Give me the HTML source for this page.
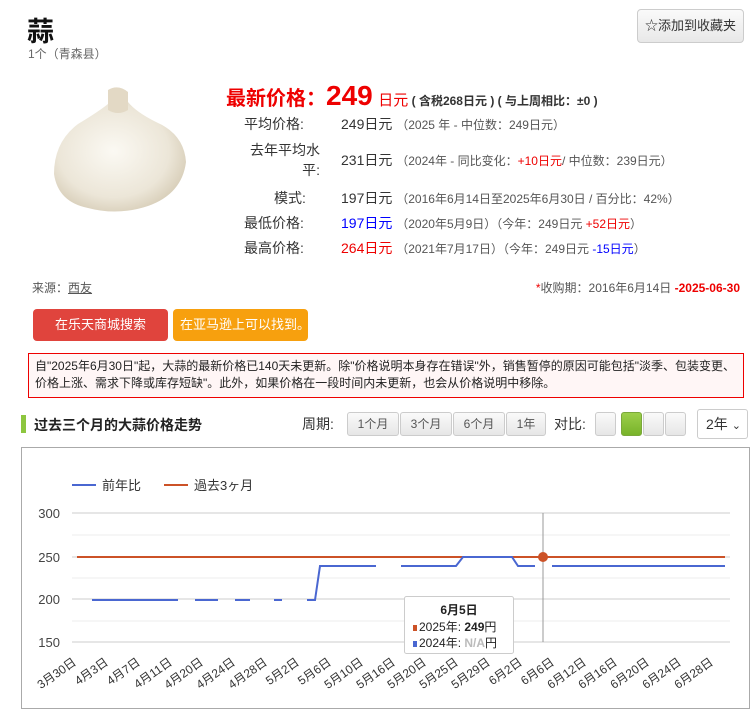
<!DOCTYPE html>
<html><head><meta charset="utf-8">
<style>
*{margin:0;padding:0;box-sizing:border-box}
body{width:752px;height:709px;background:#fff;font-family:"Liberation Sans","Noto Sans CJK SC",sans-serif;color:#333;position:relative;overflow:hidden;font-size:13px}
.a{position:absolute;white-space:nowrap}
.g{color:#555;font-size:12px}
.btn{border-radius:4px;color:#fff;font-size:13px;text-align:center;line-height:32px}
.pb{position:absolute;top:412px;height:24px;border:1px solid #ccc;border-radius:3px;background:linear-gradient(#fafafa,#e6e6e6);font-size:12px;color:#555;text-align:center;line-height:22px}
</style></head><body>
<div class="a" style="left:27px;top:10px;font-size:27px;font-weight:bold;color:#111">蒜</div>
<div class="a" style="left:28px;top:45px;font-size:12px;color:#666">1个（青森县）</div>
<div class="a" style="left:637px;top:9px;width:107px;height:34px;border:1px solid #ccc;border-radius:4px;background:linear-gradient(#fafafa,#e8e8e8);font-size:13px;line-height:32px;text-align:center;color:#333">☆添加到收藏夹</div>

<svg class="a" style="left:48px;top:82px" width="142" height="132"><defs><radialGradient id="gr" cx="45%" cy="45%" r="60%"><stop offset="0" stop-color="#fbf9f3"/><stop offset=".7" stop-color="#ece6d8"/><stop offset="1" stop-color="#d6ccb6"/></radialGradient></defs>
<path d="M60 22 Q50 30 30 42 Q6 60 6 92 Q10 120 40 126 Q70 134 100 124 Q134 112 138 80 Q136 52 108 40 Q88 30 80 20 Z" fill="url(#gr)"/>
<path d="M60 8 Q70 2 80 10 L80 28 Q70 34 60 28 Z" fill="#e3d9c5"/></svg>

<div class="a" style="left:226px;top:80px;color:#e00;font-size:20px;font-weight:bold">最新价格：<span style="font-size:28px;font-family:'Liberation Sans',sans-serif">249</span> <span style="font-size:15px;font-weight:normal">日元</span><span style="font-size:12px;color:#333"> ( 含税268日元 ) ( 与上周相比：±0 )</span></div>
<div class="a" style="left:244px;top:114px;font-size:14px">平均价格:</div>
<div class="a" style="left:341px;top:114px;font-size:14px">249日元 <span class="g">（2025 年 - 中位数：249日元）</span></div>
<div class="a" style="left:244px;top:140px;font-size:14px;line-height:20px;text-align:right;width:76px;white-space:normal">去年平均水平:</div>
<div class="a" style="left:341px;top:150px;font-size:14px">231日元 <span class="g">（2024年 - 同比变化：<span style="color:#e00">+10日元</span>/ 中位数：239日元）</span></div>
<div class="a" style="left:274px;top:188px;font-size:14px">模式:</div>
<div class="a" style="left:341px;top:188px;font-size:14px">197日元 <span class="g">（2016年6月14日至2025年6月30日 / 百分比：42%）</span></div>
<div class="a" style="left:244px;top:213px;font-size:14px">最低价格:</div>
<div class="a" style="left:341px;top:213px;font-size:14px"><span style="color:#00f">197日元</span> <span class="g">（2020年5月9日）（今年：249日元 <span style="color:#e00">+52日元</span>）</span></div>
<div class="a" style="left:244px;top:238px;font-size:14px">最高价格:</div>
<div class="a" style="left:341px;top:238px;font-size:14px"><span style="color:#e00">264日元</span> <span class="g">（2021年7月17日）（今年：249日元 <span style="color:#00f">-15日元</span>）</span></div>

<div class="a g" style="left:32px;top:279px">来源：<u>西友</u></div>
<div class="a g" style="right:12px;top:279px"><span style="color:#e00">*</span>收购期：2016年6月14日 <b style="color:#e00">-2025-06-30</b></div>
<div class="a btn" style="left:33px;top:309px;width:135px;background:#e0443d">在乐天商城搜索</div>
<div class="a btn" style="left:173px;top:309px;width:135px;background:#f7a00e;text-align:left;padding-left:7px">在亚马逊上可以找到。</div>
<div class="a" style="left:28px;top:353px;width:716px;height:45px;border:1px solid #e00;background:#fff6f6;font-size:12px;line-height:17px;padding:4px 6px;white-space:normal;color:#222">自"2025年6月30日"起，大蒜的最新价格已140天未更新。除"价格说明本身存在错误"外，销售暂停的原因可能包括"淡季、包装变更、价格上涨、需求下降或库存短缺"。此外，如果价格在一段时间内未更新，也会从价格说明中移除。</div>

<div class="a" style="left:21px;top:415px;width:5px;height:18px;background:#8dc63f"></div>
<div class="a" style="left:34px;top:415px;font-size:14px;font-weight:bold;color:#222">过去三个月的大蒜价格走势</div>
<div class="a" style="left:302px;top:414px;font-size:14px">周期:</div>
<div class="pb" style="left:347px;width:52px">1个月</div>
<div class="pb" style="left:400px;width:52px">3个月</div>
<div class="pb" style="left:453px;width:52px">6个月</div>
<div class="pb" style="left:506px;width:40px">1年</div>
<div class="a" style="left:554px;top:414px;font-size:14px">对比:</div>
<div class="pb" style="left:595px;width:21px"></div>
<div class="pb" style="left:621px;width:21px;background:linear-gradient(#9ccf4a,#78b32a);border-color:#7aa83a"></div>
<div class="pb" style="left:643px;width:21px"></div>
<div class="pb" style="left:665px;width:21px"></div>
<div class="a" style="left:697px;top:409px;width:51px;height:30px;border:1px solid #ccc;border-radius:3px;font-size:14px;line-height:28px;padding-left:8px">2年 <span style="font-size:11px">⌄</span></div>

<div class="a" style="left:21px;top:447px;width:729px;height:262px;border:1px solid #aaa"></div>
<svg class="a" style="left:0;top:0" width="752" height="709" font-family="Liberation Sans,Noto Sans CJK SC,sans-serif">
<line x1="72" y1="485" x2="96" y2="485" stroke="#4a67d1" stroke-width="2"/>
<text x="102" y="490" font-size="13" fill="#333">前年比</text>
<line x1="164" y1="485" x2="188" y2="485" stroke="#cc5227" stroke-width="2"/>
<text x="194" y="490" font-size="13" fill="#333">過去3ヶ月</text>
<g stroke="#eee"><line x1="72" y1="535" x2="730" y2="535"/><line x1="72" y1="578" x2="730" y2="578"/><line x1="72" y1="621" x2="730" y2="621"/></g>
<g stroke="#ccc"><line x1="72" y1="513" x2="730" y2="513"/><line x1="72" y1="557" x2="730" y2="557"/><line x1="72" y1="599" x2="730" y2="599"/><line x1="72" y1="642" x2="730" y2="642"/></g>
<g font-size="13" fill="#444" text-anchor="end"><text x="60" y="518">300</text><text x="60" y="562">250</text><text x="60" y="604">200</text><text x="60" y="647">150</text></g>
<line x1="543" y1="513" x2="543" y2="642" stroke="#999"/>
<line x1="77" y1="557" x2="725" y2="557" stroke="#cc5227" stroke-width="2"/>
<g stroke="#4a67d1" stroke-width="2" fill="none">
<path d="M92 600H178M195 600H218M235 600H250M274 600H282M307 600H315L320 566H376M401 566H456L463 557H512L518 566H535M552 566H725"/>
</g>
<circle cx="543" cy="557" r="5" fill="#cc5227"/>
<g font-size="12" fill="#333" text-anchor="end">
<text transform="translate(77,664) rotate(-35)">3月30日</text>
<text transform="translate(109,664) rotate(-35)">4月3日</text>
<text transform="translate(141,664) rotate(-35)">4月7日</text>
<text transform="translate(173,664) rotate(-35)">4月11日</text>
<text transform="translate(204,664) rotate(-35)">4月20日</text>
<text transform="translate(236,664) rotate(-35)">4月24日</text>
<text transform="translate(268,664) rotate(-35)">4月28日</text>
<text transform="translate(300,664) rotate(-35)">5月2日</text>
<text transform="translate(332,664) rotate(-35)">5月6日</text>
<text transform="translate(364,664) rotate(-35)">5月10日</text>
<text transform="translate(396,664) rotate(-35)">5月16日</text>
<text transform="translate(427,664) rotate(-35)">5月20日</text>
<text transform="translate(459,664) rotate(-35)">5月25日</text>
<text transform="translate(491,664) rotate(-35)">5月29日</text>
<text transform="translate(523,664) rotate(-35)">6月2日</text>
<text transform="translate(555,664) rotate(-35)">6月6日</text>
<text transform="translate(587,664) rotate(-35)">6月12日</text>
<text transform="translate(618,664) rotate(-35)">6月16日</text>
<text transform="translate(650,664) rotate(-35)">6月20日</text>
<text transform="translate(682,664) rotate(-35)">6月24日</text>
<text transform="translate(714,664) rotate(-35)">6月28日</text>
</g>
<rect x="404.5" y="596.5" width="109" height="57" rx="2" fill="#fff" stroke="#ccc"/>
<text x="459" y="614" font-size="12" font-weight="bold" text-anchor="middle" fill="#222">6月5日</text>
<rect x="413" y="625" width="4" height="6" fill="#cc5227"/>
<text x="419" y="631" font-size="12" fill="#222">2025年: <tspan font-weight="bold">249</tspan>円</text>
<rect x="413" y="641" width="4" height="6" fill="#4a67d1"/>
<text x="419" y="647" font-size="12" fill="#222">2024年: <tspan font-weight="bold" fill="#bbb">N/A</tspan>円</text>
</svg>
</body></html>
